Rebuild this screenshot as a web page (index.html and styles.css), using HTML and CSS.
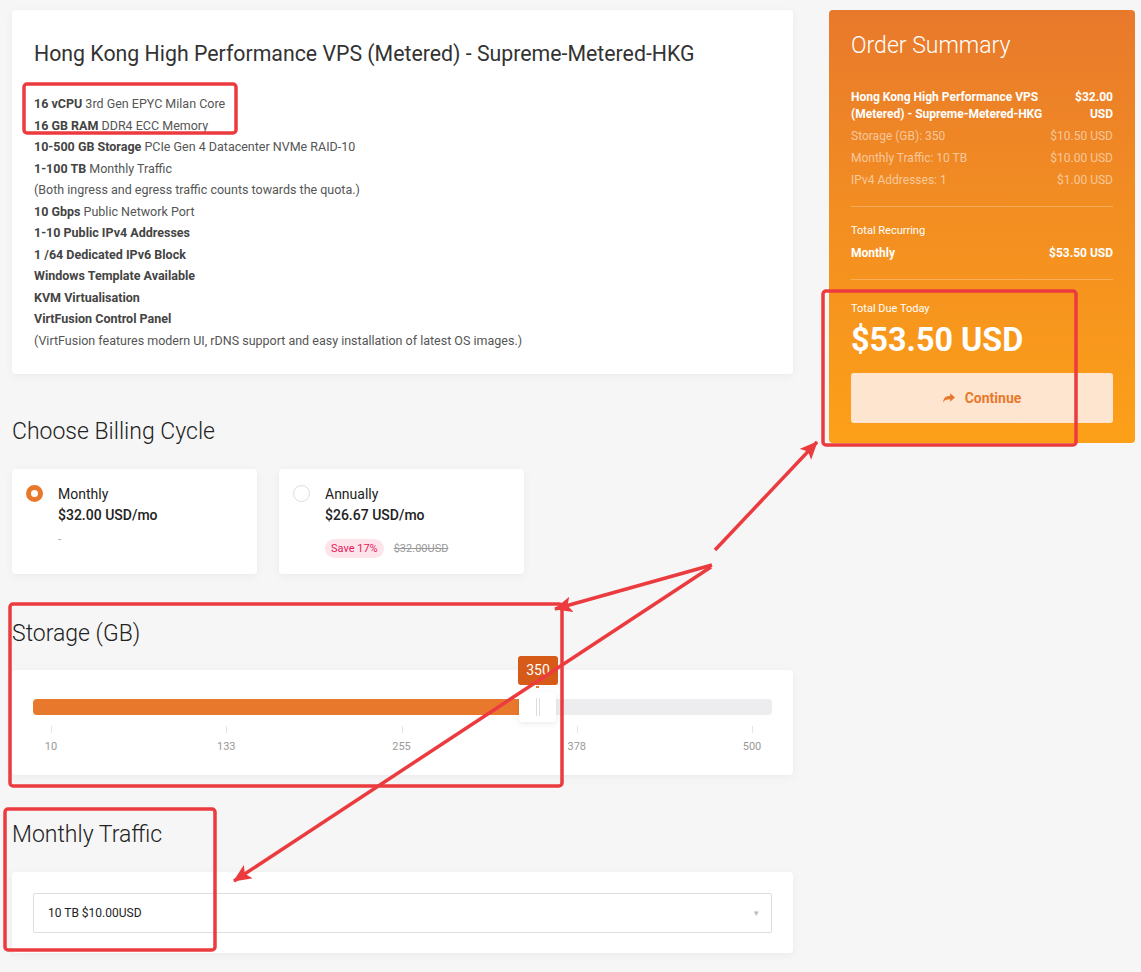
FILE: index.html
```html
<!DOCTYPE html>
<html lang="en">
<head>
<meta charset="utf-8">
<title>Configure Server</title>
<link rel="stylesheet" href="styles.css">
</head>
<body>
<div class="page">
  <main class="main-col">
    <section class="card product">
      <h1 class="product-title">Hong Kong High Performance VPS (Metered) - Supreme-Metered-HKG</h1>
      <ul class="features">
        <li><b>16 vCPU</b> 3rd Gen EPYC Milan Core</li>
        <li><b>16 GB RAM</b> DDR4 ECC Memory</li>
        <li><b>10-500 GB Storage</b> PCIe Gen 4 Datacenter NVMe RAID-10</li>
        <li><b>1-100 TB</b> Monthly Traffic</li>
        <li>(Both ingress and egress traffic counts towards the quota.)</li>
        <li><b>10 Gbps</b> Public Network Port</li>
        <li><b>1-10 Public IPv4 Addresses</b></li>
        <li><b>1 /64 Dedicated IPv6 Block</b></li>
        <li><b>Windows Template Available</b></li>
        <li><b>KVM Virtualisation</b></li>
        <li><b>VirtFusion Control Panel</b></li>
        <li>(VirtFusion features modern UI, rDNS support and easy installation of latest OS images.)</li>
      </ul>
    </section>

    <h2 class="section-title billing-title">Choose Billing Cycle</h2>
    <div class="billing">
      <label class="card cycle">
        <span class="radio radio-on"></span>
        <span class="cycle-body">
          <span class="cycle-name">Monthly</span>
          <span class="cycle-price">$32.00 USD/mo</span>
          <span class="cycle-extra"><span class="dash">-</span></span>
        </span>
      </label>
      <label class="card cycle">
        <span class="radio"></span>
        <span class="cycle-body">
          <span class="cycle-name">Annually</span>
          <span class="cycle-price">$26.67 USD/mo</span>
          <span class="cycle-extra"><span class="save">Save 17%</span><s class="old">$32.00USD</s></span>
        </span>
      </label>
    </div>

    <h2 class="section-title">Storage (GB)</h2>
    <section class="card slider-card">
      <div class="slider">
        <div class="track"><div class="fill" style="width: 66%"></div></div>
        <div class="handle" style="left: 486px"><span class="grip"></span></div>
        <div class="bubble" style="left: 485px">350</div>
      </div>
      <div class="scale">
        <span class="tick">10</span>
        <span class="tick">133</span>
        <span class="tick">255</span>
        <span class="tick">378</span>
        <span class="tick">500</span>
      </div>
    </section>

    <h2 class="section-title traffic-title">Monthly Traffic</h2>
    <section class="card select-card">
      <div class="select">
        <span>10 TB $10.00USD</span>
        <span class="caret">&#9662;</span>
      </div>
    </section>
  </main>

  <aside class="summary">
    <h2 class="summary-title">Order Summary</h2>
    <div class="row row-main">
      <span class="row-name">Hong Kong High Performance VPS (Metered) - Supreme-Metered-HKG</span>
      <span class="row-price">$32.00 USD</span>
    </div>
    <div class="row row-sub"><span>Storage (GB): 350</span><span>$10.50 USD</span></div>
    <div class="row row-sub"><span>Monthly Traffic: 10 TB</span><span>$10.00 USD</span></div>
    <div class="row row-sub"><span>IPv4 Addresses: 1</span><span>$1.00 USD</span></div>
    <hr class="divider">
    <div class="small-label">Total Recurring</div>
    <div class="row row-main"><span>Monthly</span><span>$53.50 USD</span></div>
    <hr class="divider">
    <div class="small-label due-label">Total Due Today</div>
    <div class="due">$53.50 USD</div>
    <button class="continue" type="button">
      <svg class="share" viewBox="0 0 16 14" width="12" height="11" aria-hidden="true"><path d="M16 5.6 L9.6 0 V3.2 C3.6 3.4 0.6 6.4 0 12.6 C1.8 9.2 4.8 8 9.6 8.1 V11.2 Z" fill="currentColor"/></svg>
      Continue
    </button>
  </aside>
</div>

<svg class="annotations" width="1141" height="972" viewBox="0 0 1141 972" aria-hidden="true">
  <defs>
    <marker id="head" markerUnits="userSpaceOnUse" markerWidth="20" markerHeight="20" refX="17" refY="8" orient="auto">
      <path d="M0 0 L18 8 L0 16 L4 8 Z" fill="#ec3b3f"/>
    </marker>
  </defs>
  <g fill="none" stroke="#ec3b3f" stroke-width="3.5">
    <rect x="24" y="84" width="212" height="49" rx="3"/>
    <rect x="823" y="291" width="253" height="154" rx="3"/>
    <rect x="10" y="604" width="552" height="182" rx="3"/>
    <rect x="5" y="809" width="210" height="141" rx="3"/>
    <line x1="715" y1="550" x2="817" y2="442" marker-end="url(#head)"/>
    <line x1="712" y1="565" x2="555" y2="609" marker-end="url(#head)"/>
    <line x1="711" y1="567" x2="234" y2="881" marker-end="url(#head)"/>
  </g>
</svg>
</body>
</html>
```

FILE: styles.css
```css
* { box-sizing: border-box; }

html, body {
  margin: 0;
  padding: 0;
  background: #f6f6f6;
}

body {
  font-family: Roboto, "Liberation Sans", Arial, sans-serif;
  color: #333;
  position: relative;
  width: 1141px;
  min-height: 972px;
  overflow: hidden;
}

.page {
  display: flex;
  align-items: flex-start;
  gap: 36px;
  padding: 10px 6px 0 12px;
}

.main-col {
  width: 781px;
  flex: 0 0 781px;
}

.card {
  background: #fff;
  border-radius: 4px;
  box-shadow: 0 2px 10px rgba(0, 0, 0, 0.05);
}

/* product */
.product {
  padding: 30px 22px 23px;
}

.product-title {
  margin: 0;
  font-size: 21.3px;
  font-weight: 400;
  line-height: 28px;
  color: #333;
}

.features {
  list-style: none;
  margin: 25px 0 0;
  padding: 0;
  font-size: 12.5px;
  line-height: 21.5px;
  color: #555;
}

.features b {
  font-weight: 700;
  color: #444;
}

.section-title {
  margin: 45px 0 21px;
  font-size: 23px;
  font-weight: 300;
  line-height: 30px;
  color: #222;
}

.billing-title {
  margin: 43px 0 22px;
}

.traffic-title {
  margin-bottom: 22px;
}

/* billing */
.billing {
  display: flex;
  gap: 22px;
}

.cycle {
  width: 245px;
  height: 105px;
  display: flex;
  align-items: flex-start;
  gap: 15px;
  padding: 14px 14px;
}

.radio {
  width: 17px;
  height: 17px;
  border-radius: 50%;
  border: 1px solid #ddd;
  background: #fff;
  flex: 0 0 17px;
  margin-top: 2px;
}

.radio-on {
  border: 5px solid #e8792c;
}

.cycle-body {
  display: flex;
  flex-direction: column;
}

.cycle-name,
.cycle-price {
  font-size: 14px;
  font-weight: 500;
  line-height: 22px;
  color: #222;
}

.cycle-name { font-weight: 400; }

.cycle-price { margin-top: -1px; }

.cycle-extra {
  display: flex;
  align-items: center;
  gap: 10px;
  height: 22px;
  margin-top: 11px;
}

.dash {
  align-self: flex-start;
  line-height: 11px;
  margin-top: -3px;
  color: #999;
  font-size: 11px;
}

.save {
  background: #fde4ea;
  color: #e8195a;
  font-size: 11px;
  line-height: 19px;
  padding: 0 6px;
  border-radius: 10px;
}

.old {
  font-size: 11px;
  color: #999;
}

/* slider */
.slider-card {
  height: 105px;
  padding: 29px 21px 0;
}

.slider {
  position: relative;
  height: 16px;
}

.track {
  height: 16px;
  border-radius: 4px;
  background: #ededf0;
  overflow: hidden;
}

.fill {
  height: 100%;
  background: #e8792c;
}

.handle {
  position: absolute;
  top: -7px;
  width: 37px;
  height: 30px;
  background: #fff;
  border-radius: 3px;
  box-shadow: 0 2px 6px rgba(0, 0, 0, 0.08);
  display: flex;
  justify-content: center;
  align-items: center;
}

.grip {
  width: 4px;
  height: 18px;
  border-left: 1px solid #ddd;
  border-right: 1px solid #ddd;
}

.bubble {
  position: absolute;
  top: -43px;
  width: 40px;
  height: 29px;
  background: #d65b18;
  color: #fff;
  font-size: 14px;
  line-height: 29px;
  text-align: center;
  border-radius: 3px;
}

.bubble::after {
  content: "";
  position: absolute;
  left: 18px;
  bottom: -3px;
  width: 3px;
  height: 2px;
  background: #e8792c;
}

.scale {
  display: flex;
  justify-content: space-between;
  margin: 11px 0 0;
  padding: 0 7px 0 5px;
}

.tick {
  position: relative;
  width: 26px;
  text-align: center;
  font-size: 11px;
  color: #999;
  padding-top: 14px;
}

.tick::before {
  content: "";
  position: absolute;
  top: 0;
  left: 50%;
  width: 1px;
  height: 7px;
  background: #e4e4e4;
}

/* select */
.select-card {
  padding: 21px 21px 20px;
}

.select {
  height: 40px;
  border: 1px solid #ddd;
  border-radius: 2px;
  display: flex;
  align-items: center;
  justify-content: space-between;
  padding: 0 12px 0 14px;
  font-size: 12px;
  color: #222;
}

.caret {
  color: #bbb;
  font-size: 9px;
}

/* summary */
.summary {
  width: 306px;
  flex: 0 0 306px;
  padding: 22px 22px 20px;
  border-radius: 4px;
  background: linear-gradient(180deg, #e8792c 0%, #f28d22 45%, #fda018 100%);
  color: #fff;
}

.summary-title {
  margin: 0 0 29px;
  font-size: 23px;
  font-weight: 300;
  line-height: 28px;
}

.row {
  display: flex;
  justify-content: space-between;
  gap: 10px;
  font-size: 12px;
  line-height: 17px;
  margin-bottom: 5px;
}

.row-main {
  font-weight: 700;
}

.row-price {
  text-align: right;
  flex: 0 1 56px;
}

.row-sub {
  color: rgba(255, 255, 255, 0.55);
}

.divider {
  border: 0;
  border-top: 1px solid rgba(255, 255, 255, 0.25);
  margin: 17px 0 16px;
}

.small-label {
  font-size: 11px;
  line-height: 16px;
  margin-bottom: 6px;
}

.due-label {
  margin-top: 21px;
  margin-bottom: 5px;
}

.due {
  font-size: 32.3px;
  font-weight: 700;
  line-height: 36px;
  margin-bottom: 15px;
}

.continue {
  width: 100%;
  height: 50px;
  border: 0;
  border-radius: 3px;
  background: #fde5d0;
  color: #e8792c;
  font-family: inherit;
  font-size: 14px;
  font-weight: 700;
  display: flex;
  align-items: center;
  justify-content: center;
  gap: 10px;
}

.share {
  display: block;
}

.annotations {
  position: absolute;
  left: 0;
  top: 0;
  pointer-events: none;
}
```
